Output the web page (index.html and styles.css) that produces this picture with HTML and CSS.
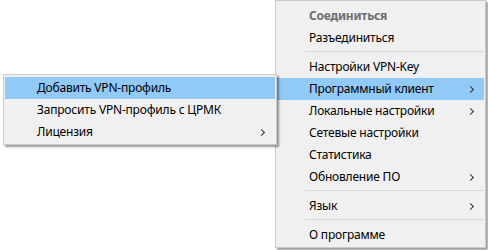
FILE: index.html
```html
<!DOCTYPE html>
<html lang="ru">
<head>
    <meta charset="UTF-8">
    <title>VPN-Key меню</title>
    <link rel="stylesheet" href="styles.css">
</head>
<body>
    <div class="desktop">
        <!-- главное меню -->
        <div class="menu main-menu">
            <div class="menu-item default disabled"><span>Соединиться</span></div>
            <div class="menu-item"><span>Разъединиться</span></div>
            <div class="menu-sep"></div>
            <div class="menu-item"><span>Настройки VPN-Key</span></div>
            <div class="menu-item active"><span>Программный клиент</span><i class="arrow"></i></div>
            <div class="menu-item"><span>Локальные настройки</span><i class="arrow"></i></div>
            <div class="menu-item"><span>Сетевые настройки</span></div>
            <div class="menu-item"><span>Статистика</span></div>
            <div class="menu-item"><span>Обновление ПО</span><i class="arrow"></i></div>
            <div class="menu-sep"></div>
            <div class="menu-item"><span>Язык</span><i class="arrow"></i></div>
            <div class="menu-sep"></div>
            <div class="menu-item"><span>О программе</span></div>
        </div>

        <!-- подменю "Программный клиент" -->
        <div class="menu sub-menu">
            <div class="menu-item active"><span>Добавить VPN-профиль</span></div>
            <div class="menu-item"><span>Запросить VPN-профиль с ЦРМК</span></div>
            <div class="menu-item"><span>Лицензия</span><i class="arrow"></i></div>
        </div>
    </div>
</body>
</html>
```

FILE: styles.css
```css
* {
    margin: 0;
    padding: 0;
    box-sizing: border-box;
}

body {
    font-family: "Noto Sans", "Liberation Sans", sans-serif;
    font-size: 12px;
    letter-spacing: -0.2px;
    color: #000;
    background: #fff;
}

.desktop {
    position: relative;
    width: 488px;
    height: 250px;
    overflow: hidden;
}

.menu {
    position: absolute;
    background: #f0f0f0;
    border: 1px solid #cccccc;
    box-shadow: 2px 2px 2px rgba(0,0,0,0.4);
    padding: 0 1px;
}

.main-menu {
    left: 275px;
    top: 0;
    width: 211px;
    height: 248px;
    padding-top: 4px;
    padding-bottom: 1px;
}

.sub-menu {
    left: 3px;
    top: 74px;
    width: 274px;
    height: 71px;
    padding-top: 2px;
    padding-bottom: 1px;
}

.menu-item {
    display: flex;
    align-items: center;
    justify-content: space-between;
    height: 22px;
    padding: 0 9px 2px 32px;
    white-space: nowrap;
}

.menu-item.active {
    background: #91c9f7;
}

.menu-item.default {
    font-weight: bold;
}

.menu-item.disabled {
    color: #6d6d6d;
}

.menu-sep {
    height: 7px;
    padding-top: 2px;
    margin-left: 28px;
}

.menu-sep::before {
    content: "";
    display: block;
    height: 1px;
    background: #d7d7d7;
}

.arrow {
    width: 5px;
    height: 5px;
    margin-top: 2px;
    border-top: 1px solid #333;
    border-right: 1px solid #333;
    transform: rotate(45deg);
    margin-right: 2px;
}
```
